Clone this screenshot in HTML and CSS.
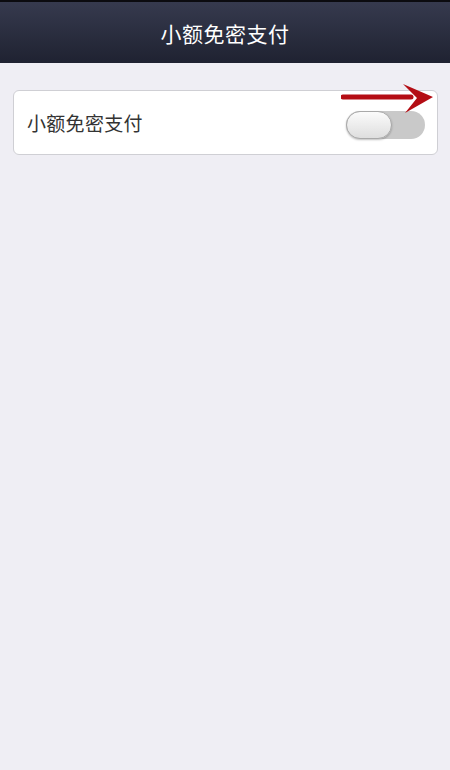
FILE: index.html
```html
<!DOCTYPE html>
<html lang="zh-CN">

<head>
    <meta charset="UTF-8">
    <meta name="viewport" content="width=device-width, initial-scale=1.0">
    <title>小额免密支付</title>
    <link rel="stylesheet" href="styles.css">
</head>

<body>
    <header class="top-bar">
        <h1>小额免密支付</h1>
    </header>

    <main class="settings">
        <div class="setting-card">
            <span class="setting-label">小额免密支付</span>
            <span class="switch">
                <span class="switch-knob"></span>
            </span>

            <!-- red pointer arrow drawn over the card -->
            <svg class="pointer" width="100" height="36" viewBox="0 0 100 36">
                <path d="M2 13 L70 13" stroke="#b40d14" stroke-width="5" stroke-linecap="round" fill="none" />
                <path d="M62 0 L92 13 L64 29 L76 14 Z" fill="#b40d14" />
            </svg>
        </div>
    </main>
</body>

</html>
```

FILE: styles.css
```css
/* page base */
body {
    margin: 0;
    padding: 0;
    background-color: #efeef4;
    font-family: "Noto Sans CJK SC", "Noto Sans", sans-serif;
    min-height: 770px;
}

.top-bar {
    height: 61px;
    border-top: 2px solid #0b0b0f;
    background: linear-gradient(#363a4e, #1f2231);
    display: flex;
    align-items: center;
    justify-content: center;
}

.top-bar h1 {
    margin: 0;
    color: #fff;
    font-size: 21px;
    font-weight: normal;
    letter-spacing: 0.5px;
}

.settings {
    padding: 27px 12px 0 13px;
}

.setting-card {
    position: relative;
    height: 63px;
    background-color: #fff;
    border: 1px solid #cfcfd4;
    border-radius: 6px;
    display: flex;
    align-items: center;
    justify-content: space-between;
    padding: 0 12px 0 13px;
}

.setting-label {
    font-size: 19px;
    color: #333;
    letter-spacing: 0.3px;
}

/* switch, off state */
.switch {
    width: 79px;
    height: 28px;
    border-radius: 14px;
    background-color: #c9c9c9;
    display: flex;
    align-items: center;
    margin-top: 4px;
}

.switch-knob {
    width: 46px;
    height: 28px;
    box-sizing: border-box;
    border-radius: 14px;
    border: 1px solid #a9a9a9;
    background: linear-gradient(#fbfbfb, #dedede);
    box-shadow: 0 1px 2px rgba(0, 0, 0, 0.25);
}

.pointer {
    position: absolute;
    left: 327px;
    top: -7px;
}
```
